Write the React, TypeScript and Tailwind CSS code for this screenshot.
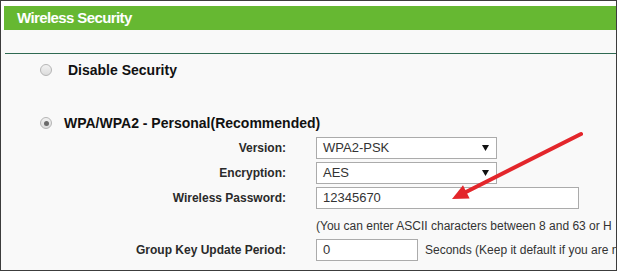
import React from "react";

function Radio({ checked }: { checked?: boolean }) {
  return (
    <span className="flex h-[12px] w-[12px] shrink-0 items-center justify-center rounded-full border border-[#b5b5b5] bg-gradient-to-b from-[#f2f2f2] to-[#dcdcdc]">
      {checked && <span className="h-[5px] w-[5px] rounded-full bg-[#6a6a6a]" />}
    </span>
  );
}

function Select({ value }: { value: string }) {
  return (
    <div className="flex h-[22px] w-[181px] shrink-0 items-center justify-between border border-[#ababab] bg-white pl-[6px] pr-[7px] text-[13px] text-[#333]">
      <span>{value}</span>
      <svg width="7" height="6" viewBox="0 0 7 6">
        <polygon points="0,0 7,0 3.5,6" fill="#111" />
      </svg>
    </div>
  );
}

function Row({ label, children }: { label: string; children: React.ReactNode }) {
  return (
    <div className="flex h-[22px] items-center">
      <div className="w-[285px] shrink-0 text-right text-[12px] font-bold text-[#2a2a2a]">{label}</div>
      <div className="ml-[30px] flex shrink-0 items-center">{children}</div>
    </div>
  );
}

export default function App() {
  return (
    <div className="relative h-[271px] w-[617px] overflow-hidden border border-[#3c3c3c] bg-[#f9f9f9] font-['Liberation_Sans',Arial,sans-serif]">
      {/* header */}
      <div className="bg-white pl-[3px] pt-[5px]">
        <div className="h-[24px] bg-[#66b832] pl-[13px] text-[15px] font-bold leading-[24px] tracking-[-0.6px] text-white">
          Wireless Security
        </div>
      </div>
      <div className="h-[23px]" />
      <div className="ml-[4px] h-px bg-[#2f6a52]" />

      {/* security options */}
      <div className="ml-[39px] mt-[6px] flex h-[20px] items-center">
        <Radio />
        <span className="ml-[16px] text-[14px] font-bold text-[#111]">Disable Security</span>
      </div>
      <div className="ml-[39px] mt-[33px] flex h-[20px] items-center">
        <Radio checked />
        <span className="ml-[12px] text-[14px] font-bold text-[#111]">WPA/WPA2 - Personal(Recommended)</span>
      </div>

      <div className="mt-[4px] flex flex-col gap-[3px]">
        <Row label="Version:">
          <Select value="WPA2-PSK" />
        </Row>
        <Row label="Encryption:">
          <Select value="AES" />
        </Row>
        <Row label="Wireless Password:">
          <div className="flex h-[22px] w-[263px] items-center border border-[#ababab] bg-white pl-[6px] text-[13px] text-[#333]">
            12345670
          </div>
        </Row>
      </div>

      <div className="mt-[7px] flex h-[20px] items-center whitespace-nowrap pl-[315px] text-[12px] text-[#333]">
        (You can enter ASCII characters between 8 and 63 or H
      </div>

      <div className="mt-[3px] flex h-[22px] items-center whitespace-nowrap">
        <div className="w-[285px] shrink-0 text-right text-[12px] font-bold text-[#2a2a2a]">Group Key Update Period:</div>
        <div className="ml-[30px] flex h-[22px] w-[102px] shrink-0 items-center border border-[#ababab] bg-white pl-[6px] text-[13px] text-[#333]">
          0
        </div>
        <span className="ml-[7px] shrink-0 text-[12px] text-[#333]">Seconds (Keep it default if you are n</span>
      </div>

      {/* red arrow annotation */}
      <svg
        className="pointer-events-none absolute left-[-1px] top-[-1px]"
        width="617"
        height="271"
        viewBox="0 0 617 271"
      >
        <line x1="466" y1="192" x2="581" y2="134" stroke="#e3262b" strokeWidth="4" strokeLinecap="round" />
        <polygon points="452,199 469.6,198.6 463,185.2" fill="#e3262b" />
      </svg>
    </div>
  );
}
